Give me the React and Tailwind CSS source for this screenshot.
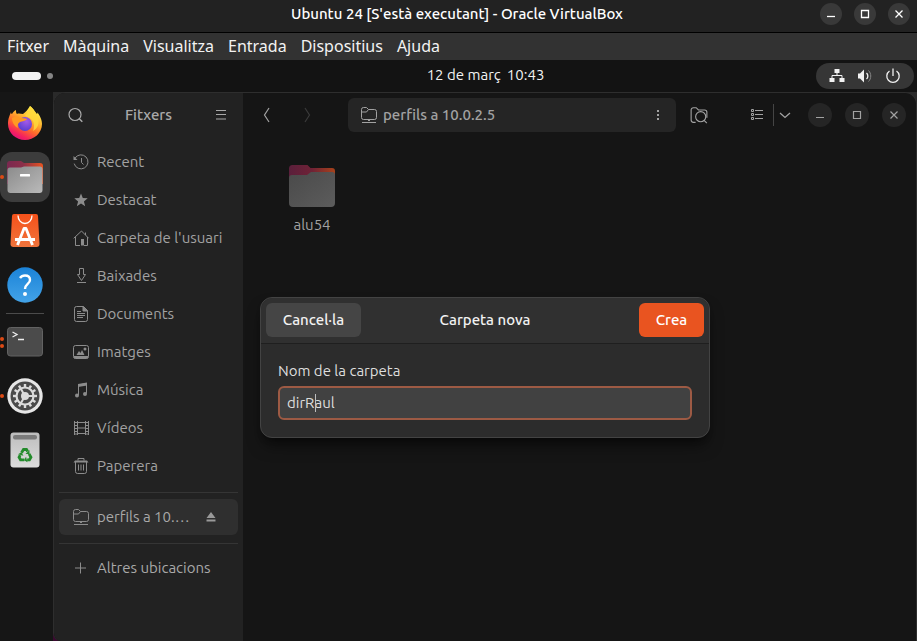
import React from "react";

function Icon({ children, size = "size-4", className = "" }) {
  return (
    <svg
      viewBox="0 0 16 16"
      className={`${size} shrink-0 ${className}`}
      fill="none"
      stroke="currentColor"
      strokeWidth="1"
      aria-hidden="true"
    >
      {children}
    </svg>
  );
}

const RecentIcon = () => (
  <Icon>
    <path d="M2 4.2A7 7 0 1 1 1.2 9.6" />
    <path d="M.5 2v4h4z" fill="currentColor" stroke="none" />
    <path d="M8.5 4v4.5l2 2" />
  </Icon>
);
const StarIcon = () => (
  <Icon>
    <path d="M8 1.500l1.800 4.600 4.900.2-3.800 3.100 1.300 4.800L8 11.500l-4.200 2.700 1.300-4.800L1.300 6.300l4.900-.2z" fill="currentColor" stroke="none" />
  </Icon>
);
const HomeIcon = () => (
  <Icon>
    <path d="M.7 8.3L8.5 1l7.2 7.3M12.5 2.5v2.5M2.5 7v8.500h4.500M14.500 7v8.500h-3.500" />
    <path d="M8 9h3v6.500H8z" fill="currentColor" stroke="none" />
  </Icon>
);
const DownloadIcon = () => (
  <Icon>
    <path d="M6.500 .5h4v6h2l-4 6-4-6h2zM4 14.500h9" />
  </Icon>
);
const DocumentIcon = () => (
  <Icon>
    <path d="M10.500.5h-7a2 2 0 0 0-2 2v11a2 2 0 0 0 2 2h9a2 2 0 0 0 2-2v-9z" />
    <path d="M10 .5v4.500h4.500z" fill="currentColor" />
    <path d="M4 7.500h8M4 9.500h8M4 11.500h6M4 5.500h4" />
  </Icon>
);
const ImageIcon = () => (
  <Icon>
    <rect x=".5" y="1.500" width="15" height="13" rx="2" />
    <path d="M1 12h14v1.500a1 1 0 0 1-1 1H2a1 1 0 0 1-1-1zM3.500 11l2.500-4 1.500 2 1.500-3 2.500 5z" fill="currentColor" stroke="none" />
    <circle cx="12" cy="5" r="1.500" fill="currentColor" stroke="none" />
  </Icon>
);
const MusicIcon = () => (
  <Icon>
    <path d="M5.500 13V3l8-1.500v10" />
    <path d="M5 2l9-1.500v3L5 5z" fill="currentColor" stroke="none" />
    <circle cx="4" cy="13.500" r="2" fill="currentColor" stroke="none" />
    <circle cx="12" cy="12" r="2" fill="currentColor" stroke="none" />
  </Icon>
);
const VideoIcon = () => (
  <Icon>
    <path d="M1.500 1v14M4.500 1v14M12.500 1v14M15.500 1v14M4.500 2.500h8M4.500 8h8M4.500 13.500h8M1.500 2.500h3M1.500 5.500h3M1.500 8.500h3M1.500 11.500h3M1.500 14h3M12.500 2.500h3M12.500 5.500h3M12.500 8.500h3M12.500 11.500h3M12.500 14h3" />
  </Icon>
);
const TrashIcon = () => (
  <Icon>
    <path d="M2.500 4v9.500a2 2 0 0 0 2 2h7a2 2 0 0 0 2-2V4M5.500 6.500v6M8 6.500v6M10.500 6.500v6M5 2.500v-2h6v2" />
    <path d="M2 2.500h12l1.500 2H.5z" fill="currentColor" stroke="none" />
  </Icon>
);
const NetworkFolderIcon = ({ size }) => (
  <Icon size={size}>
    <path d="M.5 10.500v-8a2 2 0 0 1 2-2H5.500L7.500 2.500h6a2 2 0 0 1 2 2v6a2 2 0 0 1-2 2h-11a2 2 0 0 1-2-2zM.5 5H5.500l2-2.500M1 15.500h14M7 13.500h2" />
  </Icon>
);
const PlusIcon = () => (
  <Icon>
    <path d="M7.500 2.500v11M2 8h11" />
  </Icon>
);
const EjectIcon = () => (
  <Icon>
    <path d="M8 3l4.500 6h-9zM3.500 10.500h9v2h-9z" fill="currentColor" stroke="none" />
  </Icon>
);
const SearchIcon = () => (
  <Icon>
    <circle cx="7" cy="7.500" r="6" strokeWidth="1.200" />
    <path d="M11.300 11.800l3 3" strokeWidth="1.500" />
  </Icon>
);
const MenuIcon = () => (
  <Icon>
    <path d="M3 3.500h10M3 7.500h10M3 12h10" strokeWidth="1.200" />
  </Icon>
);
const FolderSearchIcon = () => (
  <Icon size="size-[18px]">
    <path d="M5 14.500H3a2 2 0 0 1-2-2v-9a2 2 0 0 1 2-2h2.500l2 2h5.500a2 2 0 0 1 2 2v5" />
    <circle cx="9.500" cy="9.500" r="4.500" />
    <path d="M12.500 12.800l2.500 2.400" />
  </Icon>
);
const ListIcon = () => (
  <Icon>
    <path d="M2.500 2.500h2v2h-2zM2.500 6.500h2v2h-2zM2.500 10.500h2v2h-2zM6 3.500h8M6 7.500h8M6 11.500h8" />
  </Icon>
);

const places = [
  ["Recent", RecentIcon],
  ["Destacat", StarIcon],
  ["Carpeta de l'usuari", HomeIcon],
  ["Baixades", DownloadIcon],
  ["Documents", DocumentIcon],
  ["Imatges", ImageIcon],
  ["Música", MusicIcon],
  ["Vídeos", VideoIcon],
  ["Paperera", TrashIcon],
];

const windowGlyphs = [
  ["Minimitza", "M4 10.500h8"],
  ["Maximitza", "M4.500 4.500h7v7h-7z"],
  ["Tanca", "M4.500 4.500l7 7M11.500 4.500l-7 7"],
];

function HostButtons() {
  return (
    <div className="flex gap-3">
      {windowGlyphs.map(([label, d]) => (
        <button key={label} aria-label={label} className="grid size-[22px] place-items-center rounded-full bg-[#393939] text-white">
          <Icon>
            <path d={d} strokeWidth="1.300" />
          </Icon>
        </button>
      ))}
    </div>
  );
}

function GuestButtons() {
  return (
    <div className="flex gap-[13px]">
      {windowGlyphs.map(([label, d]) => (
        <button key={label} aria-label={label} className="grid size-6 place-items-center rounded-full bg-[#252525] text-[#a2a2a2]">
          <Icon>
            <path d={d} strokeWidth="1.200" />
          </Icon>
        </button>
      ))}
    </div>
  );
}

function FirefoxLogo() {
  return (
    <svg viewBox="0 0 36 36" className="size-9" aria-hidden="true">
      <defs>
        <linearGradient id="ffBody" x1="0.8" y1="0.1" x2="0.3" y2="1">
          <stop offset="0" stopColor="#fff44f" />
          <stop offset="0.35" stopColor="#ffb02e" />
          <stop offset="0.6" stopColor="#ff6a2b" />
          <stop offset="0.85" stopColor="#f5215f" />
          <stop offset="1" stopColor="#e0107d" />
        </linearGradient>
        <radialGradient id="ffGlobe" cx="0.6" cy="0.3" r="0.7">
          <stop offset="0" stopColor="#a55ae8" />
          <stop offset="1" stopColor="#5a3fd0" />
        </radialGradient>
      </defs>
      <path d="M23 1c4 3 5 6 7 8 1-1 0-2 0-2 4 5 5 9 5 12 0 9-8 16-17 16S1 28 1 19c0-6 2-9 3-12 0 0 0 2 1 2 1-2 2-3 4-4 0 2 0 3 1 4 2-1 4 0 6 0 3-2 5-5 7-8z" fill="url(#ffBody)" />
      <circle cx="18" cy="19" r="7" fill="url(#ffGlobe)" />
      <path d="M23 1c4 3 6 7 8 11 2 7-1 12-5 14 2-5 1-10-2-12-2-2-5-2-6-4 3-2 4-5 5-9z" fill="#ffd83b" opacity=".85" />
      <path d="M5 13c3-2 6-2 8 0 2 0 5 0 7 1-1 2-5 2-7 3-2 1-3 3-2 6-4-2-6-6-6-10z" fill="#ff9a22" />
    </svg>
  );
}

function FilesLogo() {
  return (
    <svg viewBox="0 0 36 36" className="size-9" aria-hidden="true">
      <defs>
        <linearGradient id="flBack" x1="0" x2="1">
          <stop offset="0" stopColor="#7a2850" />
          <stop offset="0.45" stopColor="#8c2f49" />
          <stop offset="1" stopColor="#e95420" />
        </linearGradient>
        <linearGradient id="flFront" x1="0" y1="0" x2="1" y2="1">
          <stop offset="0" stopColor="#8b8b8b" />
          <stop offset="1" stopColor="#bababa" />
        </linearGradient>
      </defs>
      <path d="M3 2h11l3 2h16a3 3 0 0 1 3 3v18H0V5a3 3 0 0 1 3-3z" fill="url(#flBack)" />
      <path d="M3 8.500h11l3-1h16a2.500 2.500 0 0 1 2.500 2.500v21a3 3 0 0 1-3 3h-29a3 3 0 0 1-3-3V11a2.500 2.500 0 0 1 2.500-2.500z" fill="url(#flFront)" />
      <rect x="13" y="15" width="10" height="2.500" rx=".5" fill="#fff" />
    </svg>
  );
}

function StoreLogo() {
  return (
    <svg viewBox="0 0 36 36" className="size-9" aria-hidden="true">
      <defs>
        <linearGradient id="stBg" x1="0" y1="0" x2="0" y2="1">
          <stop offset="0" stopColor="#f4511a" />
          <stop offset="1" stopColor="#f0743c" />
        </linearGradient>
      </defs>
      <path d="M7 1h22a2 2 0 0 1 2 2l1.500 28a3 3 0 0 1-3 3h-23a3 3 0 0 1-3-3L5 3a2 2 0 0 1 2-2z" fill="url(#stBg)" />
      <path d="M11 2.500c0 4.500 3 8 7 8s7-3.500 7-8" fill="none" stroke="#fff" strokeWidth="1.300" />
      <path d="M10.500 32l6.500-16.500h2L25.500 32M8 26.500h20" fill="none" stroke="#fff" strokeWidth="2.800" strokeLinejoin="round" />
    </svg>
  );
}

function HelpLogo() {
  return (
    <svg viewBox="0 0 36 36" className="size-9" aria-hidden="true">
      <defs>
        <linearGradient id="hpBg" x1="0" y1="0" x2="0" y2="1">
          <stop offset="0" stopColor="#1b83d8" />
          <stop offset="1" stopColor="#43a3e8" />
        </linearGradient>
      </defs>
      <circle cx="18" cy="18" r="17.700" fill="url(#hpBg)" />
      <path d="M13 11c1-1.500 3-2.500 5-2.500 3 0 5 1.500 5 4.500 0 4-5 4-5 9" fill="none" stroke="#fff" strokeWidth="2.400" />
      <circle cx="18" cy="27" r="2" fill="#fff" />
    </svg>
  );
}

function TerminalLogo() {
  return (
    <svg viewBox="0 0 36 36" className="size-9" aria-hidden="true">
      <rect x=".5" y="3.500" width="35" height="28.500" rx="3" fill="#4b4b4b" stroke="#626262" />
      <path d="M5.500 8l4.500 2.500L5.500 13M11 15.500h6" fill="none" stroke="#eee" strokeWidth="1.300" />
    </svg>
  );
}

const teeth = [0, 30, 60, 90, 120, 150, 180, 210, 240, 270, 300, 330];

function SettingsLogo() {
  return (
    <svg viewBox="0 0 36 36" className="size-9" aria-hidden="true">
      <circle cx="18" cy="18" r="17.700" fill="#e6e6e6" />
      <circle cx="18" cy="18" r="14.500" fill="#4a4a4a" />
      <g stroke="#dcdcdc" fill="none">
        {teeth.map((a) => (
          <path key={a} d="M18 6v3" strokeWidth="2.400" transform={`rotate(${a} 18 18)`} />
        ))}
        <circle cx="18" cy="18" r="8.500" strokeWidth="2.200" />
        <path d="M21 18h6M16.500 20.500l-3 5.500M16.500 15.500L13.500 10" strokeWidth="2" />
      </g>
      <circle cx="18" cy="18" r="4" fill="#dcdcdc" />
    </svg>
  );
}

function BinLogo() {
  return (
    <svg viewBox="0 0 36 36" className="size-9" aria-hidden="true">
      <defs>
        <linearGradient id="bnBg" x1="0" y1="0" x2="0" y2="1">
          <stop offset="0" stopColor="#bdbdbd" />
          <stop offset="1" stopColor="#dcdcdc" />
        </linearGradient>
      </defs>
      <rect x="3.500" y=".5" width="29" height="35" rx="3" fill="url(#bnBg)" />
      <rect x="6" y="3" width="24" height="4.500" rx="2" fill="#7b7b7b" />
      <g fill="none" stroke="#238b2b" strokeWidth="2.800">
        {[0, 120, 240].map((a) => (
          <g key={a} transform={`rotate(${a} 18 23.500)`}>
            <path d="M14.500 20.800l2-3.300h3l1.200 2" />
            <path d="M22.500 18v4h-4z" fill="#238b2b" stroke="none" />
          </g>
        ))}
      </g>
    </svg>
  );
}

function DockItem({ label, dots = 0, active = false, children }) {
  return (
    <button aria-label={label} className="relative flex h-[54px] w-[50px] items-center justify-center">
      <span className={active ? "grid size-[50px] place-items-center rounded-xl bg-[#3c3c3c]" : "grid size-[50px] place-items-center"}>
        {children}
      </span>
      <span className="absolute inset-y-0 left-0 flex flex-col justify-center gap-[3px]">
        {Array.from({ length: dots }, (_, i) => (
          <span key={i} className="h-1 w-1 rounded-full bg-[#dc4a15]" />
        ))}
      </span>
    </button>
  );
}

function Dock() {
  return (
    <nav aria-label="Dock" className="flex w-[53px] shrink-0 flex-col bg-[#161616] pt-1">
      <DockItem label="Firefox"><FirefoxLogo /></DockItem>
      <DockItem label="Fitxers" dots={1} active><FilesLogo /></DockItem>
      <DockItem label="Centre d'aplicacions"><StoreLogo /></DockItem>
      <DockItem label="Ajuda"><HelpLogo /></DockItem>
      <hr className="my-px mr-[9px] ml-1.5 border-[#4b4b4b]" />
      <DockItem label="Terminal" dots={2}><TerminalLogo /></DockItem>
      <DockItem label="Configuració" dots={1}><SettingsLogo /></DockItem>
      <DockItem label="Paperera"><BinLogo /></DockItem>
    </nav>
  );
}

function Sidebar() {
  return (
    <aside className="flex w-[189px] shrink-0 flex-col bg-[#222222] px-[5px] text-[#a9a9a9]">
      <header className="flex h-11 items-center justify-between px-[7px]">
        <button aria-label="Cerca" className="p-0.5"><SearchIcon /></button>
        <h1 className="font-medium">Fitxers</h1>
        <button aria-label="Menú" className="p-0.5"><MenuIcon /></button>
      </header>
      <ul className="mt-1.5 text-[#a2a2a2]">
        {places.map(([label, Glyph]) => (
          <li key={label}>
            <a href="#" className="flex h-[38px] items-center gap-2 pl-3.5 whitespace-nowrap">
              <span className="text-[#8c8c8c]"><Glyph /></span>
              {label}
            </a>
          </li>
        ))}
      </ul>
      <hr className="mt-[7px] border-[#353535]" />
      <div className="my-1.5 flex h-9 items-center gap-2 rounded-md bg-[#2f2f2f] pr-[19px] pl-3.5">
        <span className="text-[#8c8c8c]"><NetworkFolderIcon /></span>
        <a href="#" className="flex-1 whitespace-nowrap">perfils a 10.…</a>
        <button aria-label="Expulsa" className="text-[#999999]"><EjectIcon /></button>
      </div>
      <hr className="mt-0.5 border-[#353535]" />
      <a href="#" className="mt-[5px] flex h-[38px] items-center gap-2 pl-3.5 whitespace-nowrap">
        <span className="text-[#8c8c8c]"><PlusIcon /></span>
        Altres ubicacions
      </a>
    </aside>
  );
}

function Toolbar() {
  return (
    <header className="flex h-11 items-center pr-2.5 pl-4 text-[#a2a2a2]">
      <button aria-label="Enrere">
        <Icon><path d="M10 1L5.500 8l4.500 7" strokeWidth="1.200" /></Icon>
      </button>
      <button aria-label="Endavant" className="ml-6 text-[#3a3a3a]">
        <Icon><path d="M6 1l4.500 7L6 15" strokeWidth="1.200" /></Icon>
      </button>
      <div className="ml-[33px] flex h-[34px] flex-1 items-center rounded-md bg-[#252525] pr-2.5 pl-[13px]">
        <NetworkFolderIcon />
        <span className="ml-1.5 flex-1 font-medium">perfils a 10.0.2.5</span>
        <button aria-label="Més opcions">
          <Icon><path d="M7 3h2v2H7zM7 7h2v2H7zM7 11h2v2H7z" fill="currentColor" stroke="none" /></Icon>
        </button>
      </div>
      <button aria-label="Cerca a la carpeta" className="ml-3.5"><FolderSearchIcon /></button>
      <button aria-label="Vista de llista" className="ml-[41px]"><ListIcon /></button>
      <span className="ml-2 h-[22px] w-px bg-[#454545]" />
      <button aria-label="Opcions de vista" className="mr-[15px] ml-[3px]">
        <Icon><path d="M3 6l5 4.500L13 6" strokeWidth="1.300" /></Icon>
      </button>
      <GuestButtons />
    </header>
  );
}

function FolderArt() {
  return (
    <svg viewBox="0 0 46 42" className="h-[42px] w-[46px]" aria-hidden="true">
      <defs>
        <linearGradient id="faBack" x1="0" x2="1">
          <stop offset="0" stopColor="#5a1f3b" />
          <stop offset="0.5" stopColor="#6f2236" />
          <stop offset="1" stopColor="#a8421a" />
        </linearGradient>
        <linearGradient id="faFront" x1="0" y1="0" x2="1" y2="1">
          <stop offset="0" stopColor="#4a4a4a" />
          <stop offset="1" stopColor="#5c5c5c" />
        </linearGradient>
      </defs>
      <path d="M3.500 0h15l3 3H43a3 3 0 0 1 3 3v20H0V3.500A3.500 3.500 0 0 1 3.500 0z" fill="url(#faBack)" />
      <path d="M3 10h15l4-3h21a3 3 0 0 1 3 3v28a4 4 0 0 1-4 4H4a4 4 0 0 1-4-4V13a3 3 0 0 1 3-3z" fill="url(#faFront)" />
    </svg>
  );
}

function NewFolderDialog() {
  return (
    <form
      role="dialog"
      aria-label="Carpeta nova"
      className="w-[450px] rounded-xl border border-[#434343] bg-[#2c2c2c] text-[#f2f2f2] shadow-lg shadow-black/50"
    >
      <header className="grid grid-cols-[1fr_auto_1fr] items-center rounded-t-xl border-b border-[#1f1f1f] bg-[#303030] px-[5px] pt-[5px] pb-1.5">
        <button type="button" className="h-[34px] w-[95px] justify-self-start rounded-md bg-[#454545] font-medium">Cancel·la</button>
        <h2 className="font-medium">Carpeta nova</h2>
        <button type="submit" className="h-[34px] w-[65px] justify-self-end rounded-md bg-[#e95420] font-medium text-white">Crea</button>
      </header>
      <div className="px-[17px] pt-4 pb-[17px]">
        <label htmlFor="folder-name" className="block h-[26px] leading-[22px] text-[#dedede]">Nom de la carpeta</label>
        <div className="relative">
          <input
            id="folder-name"
            type="text"
            defaultValue="dirRaul"
            className="block h-[34px] w-full rounded-md border-2 border-[#9d5a44] bg-[#414141] px-[7px] text-[#dedede] outline-none"
          />
          <span className="absolute top-2 left-[37px] h-[18px] w-px bg-[#bebebe]" />
        </div>
      </div>
    </form>
  );
}

export default function App() {
  return (
    <div className="flex min-h-screen flex-col bg-[#161616] font-['Ubuntu','Noto_Sans',sans-serif] text-[15px] leading-5">
      <header className="grid h-8 grid-cols-[1fr_auto_1fr] items-center bg-[#222222] pr-[7px] pb-1 pl-1 text-white">
        <span />
        <p className="font-medium">Ubuntu 24 [S'està executant] - Oracle VirtualBox</p>
        <div className="justify-self-end"><HostButtons /></div>
      </header>
      <nav className="flex h-7 items-center gap-3.5 border-t border-black bg-[#323232] px-[7px] pb-0.5 font-['Noto_Sans',sans-serif] text-base text-[#f2f2f2]">
        {["Fitxer", "Màquina", "Visualitza", "Entrada", "Dispositius", "Ajuda"].map((m) => (
          <button key={m}>{m}</button>
        ))}
      </nav>
      <div className="grid h-8 grid-cols-[1fr_auto_1fr] items-center bg-[#131313] pr-[3px] pl-3 text-[#f2f2f2]">
        <div className="flex items-center gap-1.5">
          <span className="h-2 w-[29px] rounded-full bg-[#f2f2f2]" />
          <span className="size-1.5 rounded-full bg-[#858585]" />
        </div>
        <time className="flex gap-1.5 pb-0.5 pl-[45px]"><span>12 de març</span><span>10:43</span></time>
        <div className="flex h-[26px] items-center gap-3 justify-self-end rounded-full bg-[#363636] px-[13px]">
          <Icon>
            <path d="M5.500 1h5v4h-5zM.5 10h5v4h-5zM10.500 10h5v4h-5z" fill="currentColor" stroke="none" />
            <path d="M8 5v3M3 10V7.500h10V10" />
          </Icon>
          <Icon>
            <path d="M1 5.500h2L7 1.500v13l-4-4H1z" fill="currentColor" stroke="none" />
            <path d="M9.500 5a4 4 0 0 1 0 6" strokeWidth="1.300" />
            <path d="M11.500 2.500c3 3 3 8 0 11" stroke="#868686" />
          </Icon>
          <Icon>
            <path d="M4.500 3a6.200 6.200 0 1 0 7 0M8 .5V8" strokeWidth="1.300" />
          </Icon>
        </div>
      </div>
      <main className="flex flex-1">
        <Dock />
        <div className="flex flex-1 bg-linear-to-b from-[#2a2a2a] from-50% to-[#3a0a30] to-100%">
          <section className="relative flex flex-1 overflow-hidden rounded-t-xl rounded-bl-lg border-t border-r border-l border-[#2e2e2e] bg-[#151515]">
            <Sidebar />
            <div className="flex min-w-0 flex-1 flex-col">
              <Toolbar />
              <div className="flex px-[35px] pt-7">
                <a href="#" className="flex w-[68px] flex-col items-center gap-2 text-[#a2a2a2]">
                  <FolderArt />
                  alu54
                </a>
              </div>
            </div>
            <div className="absolute inset-0 flex items-center justify-center">
              <NewFolderDialog />
            </div>
          </section>
        </div>
      </main>
    </div>
  );
}
